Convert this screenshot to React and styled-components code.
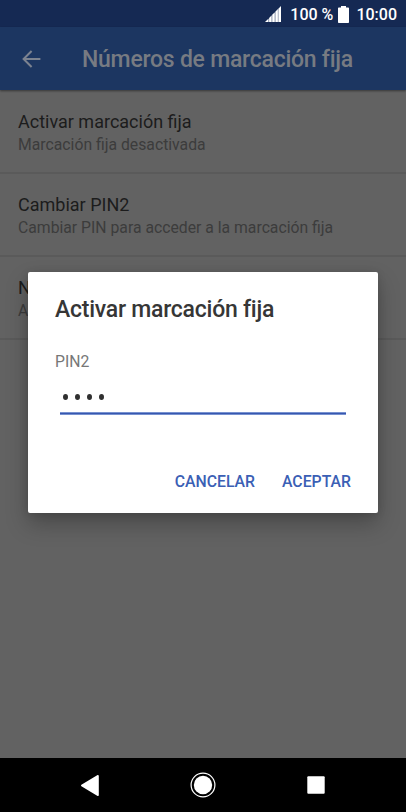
import React, { useState } from "react";
import styled, { createGlobalStyle } from "styled-components";

const settings = [
    { title: "Activar marcación fija", summary: "Marcación fija desactivada" },
    {
        title: "Cambiar PIN2",
        summary: "Cambiar PIN para acceder a la marcación fija",
    },
    { title: "N", summary: "A" },
];

function StatusBar() {
    return (
        <Status>
            <svg className="signal" width="16" height="16" viewBox="0 0 16 16">
                <path
                    fill="#fff"
                    d="M0 16L3.6 12.4V16zM4.1 11.9L6.7 9.3V16H4.1zM7.2 8.8L9.8 6.2V16H7.2zM10.3 5.7L12.9 3.1V16h-2.6zM13.3 2.7L16 0V16h-2.7z"
                />
            </svg>
            <span className="percent">100 %</span>
            <svg className="battery" width="11" height="17" viewBox="0 0 11 17">
                <path
                    fill="#fff"
                    d="M3 0h5v1.4h2.2q.8 0 .8.8v14q0 .8-.8.8H.8q-.8 0-.8-.8v-14q0-.8.8-.8H3z"
                />
            </svg>
            <span>10:00</span>
        </Status>
    );
}

function PinDialog() {
    const [pin, setPin] = useState("1234");

    return (
        <Overlay>
            <Dialog role="dialog" aria-label="Activar marcación fija">
                <h2>Activar marcación fija</h2>
                <label htmlFor="pin2">PIN2</label>
                <PinField>
                    <input
                        id="pin2"
                        type="password"
                        value={pin}
                        maxLength={8}
                        onChange={(e) => setPin(e.target.value)}
                    />
                    <div className="dots">
                        {pin.split("").map((_, i) => (
                            <i key={i} />
                        ))}
                    </div>
                </PinField>
                <Actions>
                    <ActionButton>CANCELAR</ActionButton>
                    <ActionButton>ACEPTAR</ActionButton>
                </Actions>
            </Dialog>
        </Overlay>
    );
}

function App() {
    return (
        <Screen>
            <GlobalStyle />
            <StatusBar />
            <AppBar>
                <svg width="19" height="18" viewBox="0 0 19 18">
                    <path
                        d="M9.6 1L1.6 9l8 8M1.6 9H18.4"
                        fill="none"
                        stroke="#7c8390"
                        strokeWidth="2"
                    />
                </svg>
                <h1>Números de marcación fija</h1>
            </AppBar>
            <Content>
                {settings.map((item) => (
                    <Row key={item.title}>
                        <p className="title">{item.title}</p>
                        <p className="summary">{item.summary}</p>
                    </Row>
                ))}
                <PinDialog />
            </Content>
            <NavBar>
                <svg width="20" height="23" viewBox="0 0 20 23">
                    <path
                        d="M18 1.8V21.2L1.8 11.5z"
                        fill="#fff"
                        stroke="#fff"
                        strokeWidth="1.6"
                        strokeLinejoin="round"
                    />
                </svg>
                <svg width="26" height="26" viewBox="0 0 26 26">
                    <circle cx="13" cy="13" r="11.9" fill="none" stroke="#fff" strokeWidth="1.2" />
                    <circle cx="13" cy="13" r="9.2" fill="#fff" />
                </svg>
                <svg width="18" height="18" viewBox="0 0 18 18">
                    <rect x=".3" y=".3" width="17.4" height="17.4" rx="1" fill="#fff" />
                </svg>
            </NavBar>
        </Screen>
    );
}

const GlobalStyle = createGlobalStyle`
    * {
        box-sizing: border-box;
    }
    body {
        margin: 0;
        background: #626262;
    }
    h1, h2, p {
        margin: 0;
    }
    svg {
        display: block;
        flex: none;
    }
`;

const Screen = styled.div`
    height: 100vh;
    overflow: hidden;
    display: flex;
    flex-direction: column;
    background: #626262;
    font-family: Roboto, sans-serif;
`;

const Status = styled.header`
    height: 27px;
    flex: none;
    display: flex;
    justify-content: flex-end;
    align-items: center;
    padding: 1px 9px 0 0;
    background: #152953;
    color: #fff;
    font-size: 16px;
    font-weight: 500;
    white-space: nowrap;
    .percent {
        margin: 0 5px 0 9px;
    }
    .battery {
        margin-right: 7px;
    }
`;

const AppBar = styled.header`
    height: 63px;
    flex: none;
    display: flex;
    align-items: center;
    padding: 0 22px;
    gap: 41px;
    background: #1c3661;
    box-shadow: 0 1px 2px rgba(0, 0, 0, 0.45);
    z-index: 1;
    h1 {
        padding-top: 3px;
        color: #777b82;
        font-size: 23px;
        font-weight: 500;
        letter-spacing: -0.25px;
        line-height: 28px;
        white-space: nowrap;
    }
`;

const Content = styled.main`
    flex: 1;
    position: relative;
    padding-top: 1px;
`;

const Row = styled.section`
    height: 83px;
    padding: 20px 18px 0;
    border-bottom: 2px solid #5a5a5a;
    white-space: nowrap;
    .title {
        color: #1c1c1c;
        font-size: 18px;
        line-height: 22px;
    }
    .summary {
        margin-top: 2px;
        color: #3c3c3c;
        font-size: 15.75px;
        line-height: 20px;
    }
`;

const Overlay = styled.div`
    position: absolute;
    inset: 0;
    padding: 182px 28px 0;
`;

const Dialog = styled.div`
    height: 241px;
    display: flex;
    flex-direction: column;
    padding: 23px 27px 15px;
    background: #fff;
    border-radius: 2px;
    box-shadow: 0 11px 22px rgba(0, 0, 0, 0.25), 0 1px 8px rgba(0, 0, 0, 0.12);
    h2 {
        color: #363636;
        font-size: 23px;
        font-weight: 500;
        letter-spacing: -0.25px;
        line-height: 30px;
        white-space: nowrap;
    }
    label {
        margin-top: 27px;
        color: #777;
        font-size: 15.75px;
        line-height: 20px;
    }
`;

const PinField = styled.div`
    position: relative;
    height: 43px;
    margin: 0 5px;
    background: linear-gradient(#7791d0 1px, #3757af 1px 2px, #7791d0 2px) bottom / 100% 3px no-repeat;
    input {
        width: 100%;
        height: 40px;
        padding: 0;
        border: 0;
        outline: 0;
        background: none;
        opacity: 0;
    }
    .dots {
        position: absolute;
        left: 3px;
        bottom: 15px;
        display: flex;
        gap: 7px;
        pointer-events: none;
    }
    i {
        width: 5px;
        height: 6px;
        border-radius: 50%;
        background: #303030;
    }
`;

const Actions = styled.div`
    display: flex;
    justify-content: flex-end;
    gap: 27px;
    margin-top: auto;
`;

const ActionButton = styled.button`
    padding: 0;
    border: 0;
    background: none;
    color: #3b5fb5;
    font-family: inherit;
    font-size: 15.8px;
    font-weight: 500;
    line-height: 32px;
    cursor: pointer;
`;

const NavBar = styled.nav`
    height: 54px;
    flex: none;
    display: grid;
    grid-template-columns: repeat(3, 113px);
    justify-content: center;
    justify-items: center;
    align-items: center;
    background: #000;
`;

export default App;
